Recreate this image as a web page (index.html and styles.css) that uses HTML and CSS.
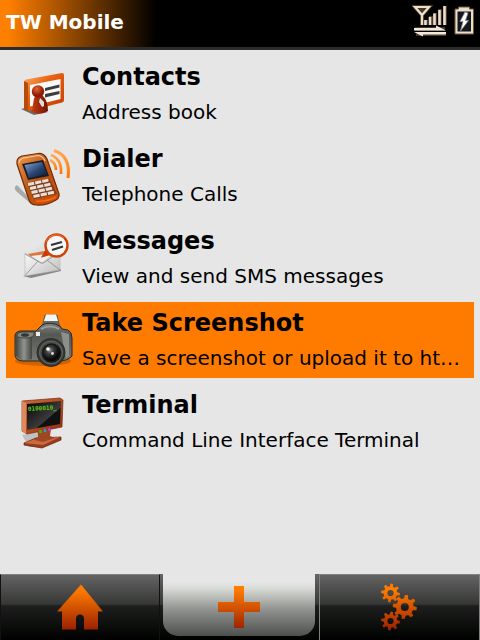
FILE: index.html
```html
<!DOCTYPE html>
<html lang="en">
<head>
<meta charset="utf-8">
<meta name="viewport" content="width=device-width, initial-scale=1">
<title>TW Mobile</title>
<link rel="stylesheet" href="styles.css">
</head>
<body>
<header class="topbar">
  <h1 class="topbar-title">TW Mobile</h1>
  <div class="status">
    <svg class="signal" viewBox="412 2 36 34" role="img" aria-label="Signal strength">
      <path d="M415 6H429L422 14ZM422 6V24M426 24V19M431 24V15M435 24V12M440 24V8M445 24V5M415 28H445M416 33H446" fill="none" stroke="#7a5524" stroke-width="4" opacity=".65"/>
      <path d="M415 6H429L422 14ZM422 12V24" fill="none" stroke="#e8e0d8" stroke-width="2.200"/>
      <path d="M425.500 24V19M430 24V16M434.500 24V12.500M439.500 24V9M444.500 24V5" stroke="#e6dfd6" stroke-width="2.600"/>
      <path d="M414 29.500V27H436V24.500L443 28L446 29.500ZM446 31H414L423 35.500V33.500H446Z" fill="#eee9e2"/>
    </svg>
    <svg class="battery" viewBox="453 2 22 34" role="img" aria-label="Battery charging">
      <path d="M455 8H458.500V6H469.500V8H473.500V33H455Z" fill="#e4ded4" stroke="#7a5524"/>
      <path d="M457.500 10.500H471V30.500H457.500Z" fill="#14181c"/>
      <path d="M465 11L460 20.500H463L460.500 30L468.500 19.500H465.500L468 12Z" fill="#fff" stroke="#888" stroke-width=".8"/>
    </svg>
  </div>
</header>

<main class="menu">
  <a class="item" href="#contacts">
    <svg class="item-icon" viewBox="12 6 64 64" aria-hidden="true">
      <defs>
        <linearGradient id="card" x1="0" y1="0" x2="1" y2="1"><stop offset="0" stop-color="#ffb070"/><stop offset=".4" stop-color="#e8620f"/><stop offset="1" stop-color="#c43c04"/></linearGradient>
        <radialGradient id="head" cx=".4" cy=".3"><stop offset="0" stop-color="#e8653a"/><stop offset="1" stop-color="#8e1c00"/></radialGradient>
        <linearGradient id="torso"><stop offset="0" stop-color="#c33c12"/><stop offset="1" stop-color="#701400"/></linearGradient>
      </defs>
      <path d="M21 53L30 51L48 56L34 59Z" fill="#333" opacity=".7"/>
      <path d="M24 26Q24 24 26 23.500L62 17Q64 17 64 19V44Q64 46 62 46.500L29 55L24 53Z" fill="url(#card)"/>
      <path d="M24 25L28 27V55L24 53Z" fill="#b64b0c"/>
      <path d="M30 29L60.500 23V43L30 50.500Z" fill="#fafafa"/>
      <path d="M45 32L59.500 28.500V31.500L45 35ZM45 38L59.500 35V38L45 41.500Z" fill="#3d3d3d"/>
      <path d="M32 56L34 42Q38 37 43 40Q48 45 48 55Q40 60 32 56Z" fill="url(#torso)"/>
      <path d="M40 42L44 46V50L42 51L39 46Z" fill="#ddd"/>
      <circle cx="38" cy="35.500" r="6.200" fill="url(#head)"/>
    </svg>
    <span class="item-text"><span class="item-title">Contacts</span><span class="item-note">Address book</span></span>
  </a>

  <a class="item" href="#dialer">
    <svg class="item-icon" viewBox="12 6 64 64" aria-hidden="true">
      <defs>
        <linearGradient id="phone" x1="0" y1="0" x2="1" y2="1"><stop offset="0" stop-color="#f09a50"/><stop offset=".5" stop-color="#b9530f"/><stop offset="1" stop-color="#d84a05"/></linearGradient>
        <linearGradient id="screen" x1="0" y1="0" x2="1" y2="1"><stop offset="0" stop-color="#87a5d2"/><stop offset=".55" stop-color="#29446f"/><stop offset="1" stop-color="#0c1a33"/></linearGradient>
        <linearGradient id="wave" x1="0" y1="0" x2="0" y2="1"><stop offset="0" stop-color="#ffab50"/><stop offset="1" stop-color="#ff7200"/></linearGradient>
      </defs>
      <path d="M17 47Q13 49 16 53L31 66L36 67Z" fill="#777" opacity=".55"/>
      <path d="M17 26Q16 20 22 18L38 15.500Q44 15 47 21L58 53Q61 59 56 62Q46 68 36 67Q31 67 29 62Z" fill="url(#phone)" stroke="#6f2d08" stroke-width="1.200"/>
      <path d="M19 25Q19 21 24 20L38 17.500Q43 18 45 23" fill="none" stroke="#ffc793" stroke-width="1.200"/>
      <path d="M22 26L43 22L49 38L28 42Z" fill="#171e2b"/>
      <path d="M24.500 27L42 24L47 36L29 40Z" fill="url(#screen)"/>
      <path d="M27 45L49 40.500L57 56L34 61Z" fill="#793a1d"/>
      <path d="M28 46.500L49 42M30 50.500L51 46M31.500 54.500L53 50M33.500 58.500L55 54" stroke="#eadfd6" stroke-width="3" stroke-dasharray="6.300 1"/>
      <path d="M36 63Q46 64 56 59" fill="none" stroke="#ee6c1c" stroke-width="1.500"/>
      <g fill="none" stroke="url(#wave)" stroke-width="2.600"><path d="M50 22Q56 25 56 32"/><path d="M51 17Q62 21 61 36"/><path d="M54 12.500Q71 18 68 40" stroke-width="3"/></g>
    </svg>
    <span class="item-text"><span class="item-title">Dialer</span><span class="item-note">Telephone Calls</span></span>
  </a>

  <a class="item" href="#messages">
    <svg class="item-icon" viewBox="12 6 64 64" aria-hidden="true">
      <defs>
        <linearGradient id="paper" x1="0" y1="0" x2="1" y2="1"><stop offset="0" stop-color="#fff"/><stop offset="1" stop-color="#bdbdbd"/></linearGradient>
        <linearGradient id="flap" x1="0" y1="0" x2="1" y2="1"><stop offset="0" stop-color="#f4f4f4"/><stop offset="1" stop-color="#c9c9c9"/></linearGradient>
      </defs>
      <path d="M23 56L60 48L61 51L31 58Z" fill="#666" opacity=".75"/>
      <path d="M25 33L43 18L60 29V37L25 40Z" fill="url(#flap)"/>
      <path d="M28 34L55 29V40L42 45L30 37Z" fill="#e1763c"/>
      <path d="M31 36L55 33V41L43 45Z" fill="#eee"/>
      <path d="M25 33L42 43L60 29V50L25 56Z" fill="url(#paper)" stroke="#aaa" stroke-width=".5"/>
      <path d="M25 55.500L38 41M60 50L47 40M25 34L41 43Q43 44 45 42L59 32" fill="none" stroke="#888" stroke-width=".8"/>
      <path d="M46 31L43 36L50 34Z" fill="#c53a05" stroke="#c53a05" stroke-width="2"/>
      <circle cx="56.500" cy="25.500" r="11" fill="#f7f7f7" stroke="#cf4307" stroke-width="2.400"/>
      <path d="M46 22A11 11 0 0 1 64 18" fill="none" stroke="#f4772e" stroke-width="1"/>
      <path d="M51 25L62 22M52 30L63 26.500" stroke="#353535" stroke-width="2.200"/>
    </svg>
    <span class="item-text"><span class="item-title">Messages</span><span class="item-note">View and send SMS messages</span></span>
  </a>

  <a class="item item-selected" href="#screenshot" aria-current="true">
    <svg class="item-icon" viewBox="12 6 64 64" aria-hidden="true">
      <defs>
        <linearGradient id="body" x1="0" y1="0" x2="0" y2="1"><stop offset="0" stop-color="#828480"/><stop offset=".3" stop-color="#555753"/><stop offset="1" stop-color="#777974"/></linearGradient>
        <linearGradient id="grip"><stop offset="0" stop-color="#444"/><stop offset=".5" stop-color="#91938f"/><stop offset="1" stop-color="#41433f"/></linearGradient>
        <radialGradient id="glass" cx=".4" cy=".35"><stop offset="0" stop-color="#999"/><stop offset=".4" stop-color="#3e403e"/><stop offset="1" stop-color="#090a09"/></radialGradient>
      </defs>
      <ellipse cx="43" cy="59" rx="28" ry="5" fill="#8e3e00" opacity=".4"/>
      <path d="M43 21L45 13H57L60 26H42Z" fill="#686a67" stroke="#555" stroke-width=".8"/>
      <path d="M46 12.500H56L58 19H44Z" fill="#f5f5f5"/>
      <path d="M15 34Q15 30 20 29H36L42 23Q50 19 60 24L62 27L68 28Q72 30 72 36V54Q68 59 58 59H22Q15 58 15 53Z" fill="url(#body)" stroke="#272927"/>
      <path d="M16 35L32 32V57Q22 60 16 54Z" fill="url(#grip)"/>
      <path d="M17 34Q17 30 23 30L34 30Q35 36 26 36Q18 36 17 34Z" fill="#858783" stroke="#343634" stroke-width=".8"/>
      <ellipse cx="25" cy="33" rx="4" ry="1.800" fill="#343634"/>
      <path d="M41 27Q50 22 59 27" fill="none" stroke="#a2a49f" stroke-width="1.500"/>
      <path d="M61 30L69 32V54L66 56Z" fill="#8d8f8b"/>
      <rect x="36" y="30" width="4" height="4" fill="#eee"/>
      <circle cx="51" cy="50.500" r="14" fill="#353735" stroke="#2a2c2a"/>
      <circle cx="51" cy="50.500" r="11.500" fill="#4b4d4b" stroke="#656763"/>
      <circle cx="51.500" cy="51" r="9" fill="url(#glass)" stroke="#161816" stroke-width="1.500"/>
      <circle cx="48" cy="47" r="1.800" fill="#fff"/><circle cx="52.500" cy="51.500" r="1.400" fill="#ddd"/>
    </svg>
    <span class="item-text"><span class="item-title">Take Screenshot</span><span class="item-note">Save a screenshot or upload it to ht…</span></span>
  </a>

  <a class="item" href="#terminal">
    <svg class="item-icon" viewBox="12 6 64 64" aria-hidden="true">
      <defs>
        <linearGradient id="frame" x1="0" y1="0" x2="1" y2="1"><stop offset="0" stop-color="#d06a38"/><stop offset=".5" stop-color="#b94b1e"/><stop offset="1" stop-color="#8a2c0c"/></linearGradient>
        <linearGradient id="glare" x1="0" y1="0" x2="1" y2="1"><stop offset="0" stop-color="#050505"/><stop offset=".6" stop-color="#3b3b3b"/><stop offset=".62" stop-color="#111"/></linearGradient>
      </defs>
      <path d="M22 51L36 48L42 63L29 63Z" fill="#777" opacity=".35"/>
      <path d="M24 59L36 54L61 53V56L42 64L24 61Z" fill="#9c3c18" stroke="#55200c" stroke-width=".7"/>
      <path d="M24 59L35 55L60 53L43 61Z" fill="#cb6a43"/>
      <path d="M37 45H51L50 52L55 54L43 58L34 56L38 53Z" fill="#9e4723"/>
      <path d="M22 17L60 14L63 16L62 43L27 50L22 47Z" fill="url(#frame)" stroke="#732d12" stroke-width=".7"/>
      <path d="M22 17L26 19V50L22 47Z" fill="#e18759"/>
      <path d="M27 20L61 17L60 40L27 46Z" fill="url(#glare)"/>
      <text class="screen-text" x="28" y="27" transform="rotate(-3 28 27)">0100010_</text>
      <circle cx="40.500" cy="47.500" r="1.600" fill="#3fb914"/><circle cx="45" cy="46.500" r="1.600" fill="#2b9de0"/><circle cx="49.500" cy="45.500" r="1.600" fill="#c33fd0"/>
    </svg>
    <span class="item-text"><span class="item-title">Terminal</span><span class="item-note">Command Line Interface Terminal</span></span>
  </a>
</main>

<nav class="tabs" aria-label="Sections">
  <button class="tab" type="button" aria-label="Home">
    <svg class="tab-icon" viewBox="56 583 48 48" aria-hidden="true">
      <defs><linearGradient id="fire" gradientUnits="userSpaceOnUse" x1="0" y1="590" x2="0" y2="630"><stop offset="0" stop-color="#ff7b00"/><stop offset="1" stop-color="#992000"/></linearGradient></defs>
      <path d="M81 584.500L103 611.500H98V629.500H84V619Q84 614.500 80 614.500Q76 614.500 76 619V629.500H62V611.500H57Z" fill="url(#fire)"/>
    </svg>
  </button>
  <button class="tab tab-active" type="button" aria-label="Add" aria-pressed="true">
    <svg class="tab-icon" viewBox="215 583 48 48" aria-hidden="true">
      <path d="M234 586H244V602H260V612H244V628H234V612H218V602H234Z" fill="url(#fire)"/>
    </svg>
  </button>
  <button class="tab" type="button" aria-label="Settings">
    <svg class="tab-icon" viewBox="376 583 48 48" aria-hidden="true">
      <defs>
        <g id="tooth-pair"><path d="M-2.100 -8L-1.600 -12H1.600L2.100 -8V8L1.600 12H-1.600L-2.100 8Z"/></g>
        <g id="gear" fill="#fff">
          <use href="#tooth-pair" transform="rotate(8)"/><use href="#tooth-pair" transform="rotate(53)"/><use href="#tooth-pair" transform="rotate(98)"/><use href="#tooth-pair" transform="rotate(143)"/>
          <circle r="8.800"/><circle r="4" fill="#000"/>
        </g>
        <mask id="gears" maskUnits="userSpaceOnUse" x="375" y="580" width="50" height="54">
          <use href="#gear" transform="translate(390.500 593) scale(.78)"/>
          <use href="#gear" transform="translate(404.800 607)"/>
          <use href="#gear" transform="translate(390.500 621) scale(.78)"/>
        </mask>
      </defs>
      <rect x="375" y="580" width="50" height="54" fill="url(#fire)" mask="url(#gears)"/>
    </svg>
  </button>
</nav>
</body>
</html>
```
FILE: styles.css
```css
* {
  box-sizing: border-box;
}

body {
  margin: 0;
  min-height: 100vh;
  display: flex;
  flex-direction: column;
  background: #e6e6e6;
  color: #000;
  font-family: "DejaVu Sans", Verdana, sans-serif;
}

.topbar {
  display: flex;
  align-items: center;
  justify-content: space-between;
  height: 50px;
  padding: 0 5px 4px 6px;
  border-bottom: 3px solid #2c2c2c;
  background: linear-gradient(90deg, #ff7f00 0, #ff7f00 8px, #000 156px);
}

.topbar-title {
  margin: 0;
  color: #fff;
  font-size: 20px;
  line-height: 24px;
}

.status {
  display: flex;
  gap: 5px;
  padding-bottom: 4px;
}

.signal {
  width: 36px;
  height: 34px;
}

.battery {
  width: 22px;
  height: 34px;
}

.menu {
  flex: 1;
  display: flex;
  flex-direction: column;
  gap: 6px;
  padding: 6px;
}

.item {
  display: flex;
  align-items: center;
  gap: 6px;
  padding: 6px;
  color: inherit;
  text-decoration: none;
}

.item-selected {
  background: #ff7b00;
}

.item-icon {
  flex: none;
  width: 64px;
  height: 64px;
}

.item-text {
  display: flex;
  flex-direction: column;
  gap: 7px;
  min-width: 0;
}

.item-title {
  font-size: 24px;
  font-weight: bold;
  line-height: 28px;
}

.item-note {
  overflow: hidden;
  font-size: 20px;
  line-height: 28px;
  text-overflow: ellipsis;
  white-space: nowrap;
}

.screen-text {
  fill: #62ce17;
  font: bold 6px "DejaVu Sans Mono", monospace;
}

.tabs {
  display: grid;
  grid-template-columns: 160fr 159fr 161fr;
  height: 66px;
  background: linear-gradient(#666 0, #555 10px, #363835 30px, #1d1e1d 32px, #080a08 56px, #000);
}

.tab {
  display: flex;
  justify-content: center;
  padding: 8px 0 0;
  border: 1px solid #111;
  border-top-color: #808080;
  border-bottom: 0;
  background: none;
}

.tab:last-child {
  border-color: #808080;
}

.tab-active {
  margin: 0 4px 4px 3px;
  padding: 9px 0 0;
  border: 0;
  border-radius: 0 0 15px 15px;
  background: linear-gradient(#e6e6e6 0, #e6e6e6 8px, #dcdfda 13px, #8f918e 36px, #4d504c);
}

.tab-icon {
  width: 48px;
  height: 48px;
}
```
